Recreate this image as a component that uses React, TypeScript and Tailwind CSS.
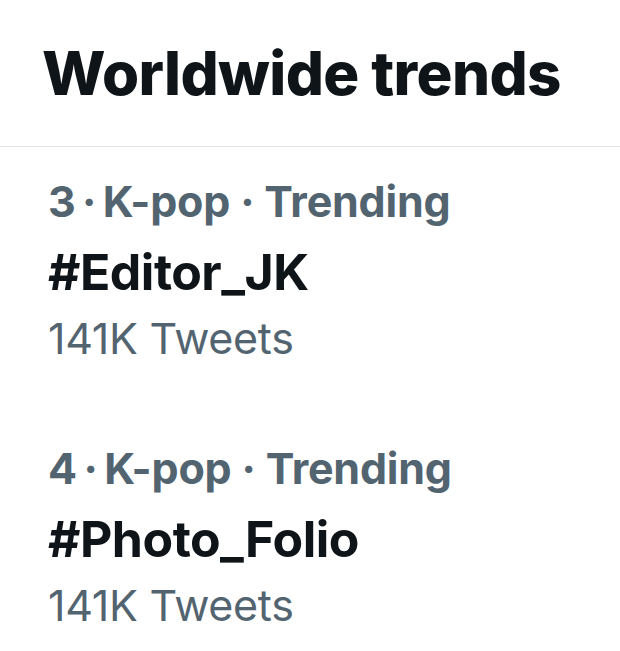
const TRENDS = [
  { rank: 3, category: "K-pop", tag: "#Editor_JK", count: "141K Tweets" },
  { rank: 4, category: "K-pop", tag: "#Photo_Folio", count: "141K Tweets" },
];

function TrendRow({ rank, category, tag, count }: (typeof TRENDS)[number]) {
  return (
    <div className="px-[48px]">
      <div className="text-[43px] leading-[66px] font-bold text-[#536471] tracking-[-0.2px]">
        {rank}{"\u2009·\u2009"}{category} · Trending
      </div>
      <div className="text-[50px] leading-[76px] font-bold text-[#0f1419] tracking-[-0.5px]">
        {tag}
      </div>
      <div className="text-[43px] leading-[56px] text-[#536471] tracking-[-0.3px]">{count}</div>
    </div>
  );
}

export default function App() {
  return (
    <div
      className="w-[620px] h-[651px] bg-white overflow-hidden"
      style={{ fontFamily: "Inter, 'Liberation Sans', sans-serif" }}
    >
      <div className="h-[147px] flex items-center px-[42px] border-b border-[#e1e4e6]">
        <h1 className="text-[60px] leading-none font-extrabold text-[#0f1419] tracking-[-0.6px]">
          Worldwide trends
        </h1>
      </div>
      <div className="pt-[21px] flex flex-col gap-[69px]">
        {TRENDS.map((t) => (
          <TrendRow key={t.rank} {...t} />
        ))}
      </div>
    </div>
  );
}
